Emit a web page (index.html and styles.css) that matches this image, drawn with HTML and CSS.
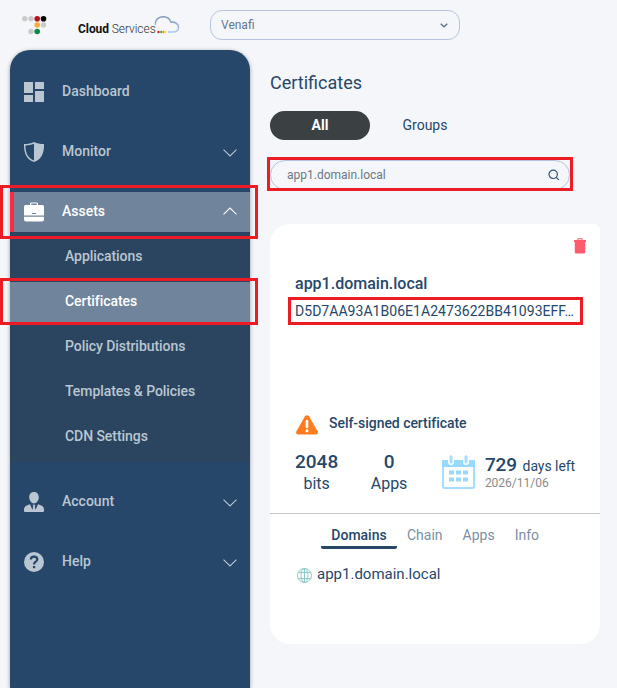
FILE: index.html
```html
<!DOCTYPE html>
<html lang="en">
<head>
<meta charset="utf-8">
<title>Certificates</title>
<link rel="stylesheet" href="styles.css">
</head>
<body>
<header class="topbar">
  <svg class="dots" width="26" height="20" viewBox="0 0 26 20">
    <g fill="#cbcbcb"><circle cx="2.7" cy="3.7" r="2.7"/><circle cx="9" cy="3.7" r="2.7"/><circle cx="21.5" cy="10" r="2.7"/><circle cx="9" cy="16.5" r="2.7"/></g>
    <circle cx="15.2" cy="3.7" r="2.8" fill="#b5121f"/><circle cx="21.5" cy="3.7" r="2.8" fill="#000"/>
    <circle cx="15.2" cy="10" r="2.8" fill="#fbab3c"/><circle cx="15.2" cy="16.5" r="2.8" fill="#0c8a43"/>
  </svg>
  <div class="brand"><b>Cloud</b> Services</div>
  <svg class="cloud" width="28" height="20" viewBox="0 0 28 20">
    <defs><linearGradient id="cg" x1="0" y1="0" x2="0" y2="1"><stop offset="0" stop-color="#7d97b3"/><stop offset="1" stop-color="#a9c8ff"/></linearGradient></defs>
    <path d="M1.2 9.8C1 5 4.200 1.800 9 1.700C13.300 1.600 15.900 3.800 17 7.200C21.500 6.700 24.500 9 24.500 12.400C24.500 15.400 22 17 19.500 17H14" fill="none" stroke="url(#cg)" stroke-width="1.600"/>
    <circle cx="4.500" cy="17" r="1.200" fill="#d11c35"/><circle cx="7.300" cy="17" r="1.200" fill="#45a45b"/><circle cx="9.600" cy="17" r="1.200" fill="#ffa000"/><circle cx="11.300" cy="17" r="1" fill="#ffe000"/>
  </svg>
  <div class="select"><span>Venafi</span>
    <svg width="8" height="5" viewBox="0 0 8 5"><path d="M.7.700 4 3.700 7.300.7" fill="none" stroke="#5b738f" stroke-width="1.400"/></svg>
  </div>
</header>
<div class="layout">
  <nav class="sidebar">
    <a class="item"><svg class="icon" viewBox="0 0 20 20"><path d="M0 0h9v11H0zM11 0h9v7h-9zM0 13h9v7H0zM11 9h9v11h-9z"/></svg><span>Dashboard</span></a>
    <a class="item"><svg class="icon" viewBox="0 0 20 20"><path fill-rule="evenodd" d="M10 0C13 1.500 16 2 20 2C20.300 11 17.500 17.500 10 20C2.500 17.500-.3 11 0 2C4 2 7 1.500 10 0ZM10 1.800C7 3 4.500 3.400 1.400 3.500C1.500 10.500 3.500 16 10 18.500Z"/></svg><span>Monitor</span><svg class="chev" viewBox="0 0 14 8"><path d="M.5.700 7 7 13.500.7"/></svg></a>
    <a class="item active"><svg class="icon" viewBox="0 0 20 20"><path fill-rule="evenodd" d="M6 3V1.200Q6 .5 7 .5H13Q14 .5 14 1.200V3H18.500Q20 3 20 4.500V13.500H0V4.500Q0 3 1.500 3ZM7.200 3H12.800V1.600H7.200ZM8 11V12H12V11ZM0 14.800H20V17.500Q20 19.500 18 19.500H2Q0 19.500 0 17.500Z"/></svg><span>Assets</span><svg class="chev" viewBox="0 0 14 8"><path d="M.5 7.300 7 1 13.500 7.300"/></svg></a>
    <div class="submenu">
      <a>Applications</a><a class="current">Certificates</a><a>Policy Distributions</a><a>Templates &amp; Policies</a><a>CDN Settings</a>
    </div>
    <a class="item"><svg class="icon" viewBox="0 0 20 20"><path d="M10 0C13 0 14.800 2.200 14.800 5.300C14.800 8.500 12.600 11.500 10 11.500S5.200 8.500 5.200 5.300C5.200 2.200 7 0 10 0ZM6 12.200 8.500 18 9.200 14 8.500 12.800H11.500L10.800 14 11.500 18 14 12.200C18 13.500 20 14.500 20 18V19Q20 20 19 20H1Q0 20 0 19V18C0 14.500 2 13.500 6 12.200Z"/></svg><span>Account</span><svg class="chev" viewBox="0 0 14 8"><path d="M.5.700 7 7 13.500.7"/></svg></a>
    <a class="item"><svg class="icon" viewBox="0 0 20 20"><circle cx="10" cy="10" r="10"/><path class="cut" d="M6.800 7.500C6.900 5.500 8.200 4.600 10 4.600S13.300 5.700 13.300 7.400C13.300 9.700 10 9.700 10 12.500"/><path class="cutfill" d="M8.900 14h2.300v2.200H8.900z"/></svg><span>Help</span><svg class="chev" viewBox="0 0 14 8"><path d="M.5.700 7 7 13.500.7"/></svg></a>
    <div class="mark mark-assets"></div><div class="mark mark-certs"></div>
  </nav>
  <main>
    <h1>Certificates</h1>
    <div class="filters"><span class="pill">All</span><span class="groups">Groups</span></div>
    <div class="search"><span>app1.domain.local</span>
      <svg width="12" height="12" viewBox="0 0 12 12" fill="none" stroke="#315172" stroke-width="1.200"><circle cx="5.200" cy="5.300" r="4.200"/><path d="m8.300 8.400 2.500 2.500"/></svg>
      <div class="mark mark-search"></div>
    </div>
    <section class="card">
      <div class="summary">
        <svg class="trash" width="12" height="16" viewBox="0 0 12 16"><path fill="#ff5a6e" fill-rule="evenodd" d="M3.300 2V1Q3.300.3 4 .3H8Q8.700.3 8.700 1V2H12V4H11.200V14.500Q11.200 15.500 10 15.500H2Q.8 15.500.8 14.500V4H0V2ZM4.300 2H7.700V1.300H4.300Z"/></svg>
        <h2>app1.domain.local</h2>
        <div class="print"><span>D5D7AA93A1B06E1A2473622BB41093EFF…</span><div class="mark mark-print"></div></div>
        <div class="warning">
          <svg width="22" height="20" viewBox="0 0 22 20"><path fill="#ff7b20" d="M9 1.200Q11-.8 13 1.200L21.700 16.500Q22.500 19.400 20 19.500H2Q-.5 19.400.3 16.500Z"/><path d="M11 6v6" stroke="#fff" stroke-width="2.600" stroke-linecap="round"/><circle cx="11" cy="15.800" r="1.500" fill="#fff"/></svg>
          <span>Self-signed certificate</span>
        </div>
        <div class="stats">
          <div class="stat bits"><strong>2048</strong><span>bits</span></div>
          <div class="stat apps"><strong>0</strong><span>Apps</span></div>
          <svg class="calendar" width="33" height="34" viewBox="0 0 33 34"><rect x="1" y="6" width="31" height="27" rx="1" fill="#fff" stroke="#a5deff" stroke-width="2"/><path fill="#98d9ff" d="M0 6Q0 5 1 5H32Q33 5 33 6V12H0Z"/><path fill="#fff" d="M6 4.500h6V7a3 3 0 0 1-6 0zM21 4.500h6V7a3 3 0 0 1-6 0z"/><path d="M9 1.800V7M24 1.800V7" stroke="#a5deff" stroke-width="3" stroke-linecap="round"/><path fill="#98d9ff" d="M7 15.500h5v4H7zm7 0h5v4h-5zm7 0h5v4h-5zM7 22.500h5v4H7zm7 0h5v4h-5zm7 0h5v4h-5z"/></svg>
          <div class="expiry"><div><strong>729</strong> days left</div><small>2026/11/06</small></div>
        </div>
      </div>
      <div class="tabs"><span class="selected">Domains</span><span>Chain</span><span>Apps</span><span>Info</span></div>
      <div class="domain">
        <svg width="15" height="15" viewBox="0 0 15 15" fill="none" stroke="#8bcac8"><circle cx="7.500" cy="7.500" r="7"/><ellipse cx="7.500" cy="7.500" rx="3.500" ry="7"/><path d="M7.500.5v14M1.500 4.500h12M1.500 10.500h12"/></svg>
        <span>app1.domain.local</span>
      </div>
    </section>
  </main>
</div>
</body>
</html>
```

FILE: styles.css
```css
* { box-sizing: border-box; }
body { margin: 0; height: 688px; overflow: hidden; background: #f4f6f9; color: #26476a; font-family: Roboto, "Liberation Sans", sans-serif; }
svg { display: block; flex: none; }
.topbar { height: 50px; display: flex; align-items: flex-start; padding-left: 22px; }
.dots { margin-top: 15px; }
.brand { margin: 22px 0 0 30px; width: 76px; font-size: 12px; line-height: 14px; color: #333; font-weight: 300; letter-spacing: -.07px; white-space: nowrap; }
.brand b { color: #111; font-weight: 700; }
.cloud { margin: 15px 0 0; }
.select { margin: 10px 0 0 28px; width: 250px; height: 30px; border: 1px solid #b5c5dd; border-radius: 12px; padding: 0 11px 0 10px; display: flex; align-items: center; justify-content: space-between; font-size: 12px; color: #65788c; }
.layout { display: flex; height: 638px; }
.sidebar { position: relative; width: 240px; margin-left: 10px; padding-top: 22px; background: #26476a; border-radius: 20px 20px 0 0; box-shadow: 0 1px 4px rgba(0,0,0,.35); color: #bac6d1; }
.item { display: flex; align-items: center; height: 40px; padding: 0 13px 0 14px; margin-bottom: 20px; font-size: 14px; font-weight: 500; }
.item span { flex: 1; margin: -2px 0 0 18px; }
.icon { width: 20px; height: 20px; fill: #bac6d1; }
.chev { width: 14px; height: 8px; fill: none; stroke: currentColor; stroke-width: 1.1; margin-top: 1px; }
.active .chev { margin-top: -2px; }
.cut { fill: none; stroke: #26476a; stroke-width: 2.2; }
.cutfill { fill: #26476a; }
.active { background: linear-gradient(#ff2948, #ff2948) left / 4px no-repeat, #70849b; color: #fff; margin-bottom: 0; }
.active .icon { fill: #fff; }
.submenu { background: #2b4560; padding: 5px 0; margin-bottom: 20px; display: grid; gap: 5px; }
.submenu a { height: 40px; line-height: 38px; padding-left: 55px; font-size: 14px; font-weight: 500; letter-spacing: -.06px; }
.submenu .current { background: #70849b; color: #fff; }
.mark { position: absolute; border: 3px solid #ed1c24; z-index: 2; }
.mark-assets { left: -10px; top: 135px; width: 258px; height: 54px; }
.mark-certs { left: -10px; top: 228px; width: 258px; height: 47px; }
main { width: 330px; margin-left: 20px; }
h1 { margin: 21px 0 0; font-size: 18px; line-height: 24px; font-weight: 400; }
.filters { display: flex; align-items: center; margin-top: 16px; height: 29px; font-size: 14px; }
.pill { width: 100px; height: 29px; line-height: 28px; border-radius: 15px; text-align: center; background: #3b4143; color: #fff; font-weight: 700; }
.groups { margin: -2px 0 0 32.5px; }
.search { position: relative; margin-top: 20px; width: 300px; height: 30px; border: 1px solid #b5c5dd; border-radius: 15px; display: flex; align-items: center; justify-content: space-between; padding: 0 9px 0 16px; font-size: 12px; color: #6c7883; }
.mark-search { left: -4px; top: -4px; width: 306px; height: 34px; }
.card { margin-top: 34px; height: 420px; background: #fff; border-radius: 20px 6px 20px 20px; }
.summary { position: relative; height: 290px; padding: 48px 25px 0; border-bottom: 1px solid #c3c6c9; }
.trash { position: absolute; right: 14px; top: 14px; }
h2 { margin: 0; font-size: 16px; line-height: 24px; font-weight: 500; }
.print { position: relative; font-size: 14px; line-height: 20px; margin-top: 5px; white-space: nowrap; letter-spacing: .04px; }
.mark-print { left: -7px; top: -4px; width: 295px; height: 28px; }
.warning { display: flex; margin: 93px 0 0 1px; gap: 11px; font-size: 14px; line-height: 18px; font-weight: 500; letter-spacing: -.04px; }
.warning svg { margin-top: 1px; }
.stats { display: flex; margin-top: 16px; }
.stat { display: flex; flex-direction: column; align-items: center; font-size: 16px; line-height: 22px; }
.stat strong, .expiry strong { font-size: 19px; font-weight: 500; }
.expiry strong { margin-right: 2px; }
.apps { margin-left: 32.5px; }
.calendar { margin: 4px 0 0 34.5px; }
.expiry { margin: 3px 0 0 10px; font-size: 14px; line-height: 22px; white-space: nowrap; letter-spacing: -.05px; }
.expiry small { display: block; margin-top: -1px; font-size: 12px; line-height: 14px; letter-spacing: 0; color: #8a8a8a; }
.tabs { display: flex; margin: 11px 0 0 51px; gap: 10px; font-size: 14px; line-height: 20px; color: #7c8fa4; }
.tabs .selected { width: 76px; text-align: center; height: 24px; border-bottom: 3px solid #26476a; border-radius: 2px; color: #26476a; font-weight: 500; }
.tabs span + span { margin-right: 10px; }
.domain { display: flex; align-items: center; margin: 15px 0 0 27px; gap: 5px; font-size: 15px; line-height: 20px; }
.domain svg { margin-top: 3px; }
```
